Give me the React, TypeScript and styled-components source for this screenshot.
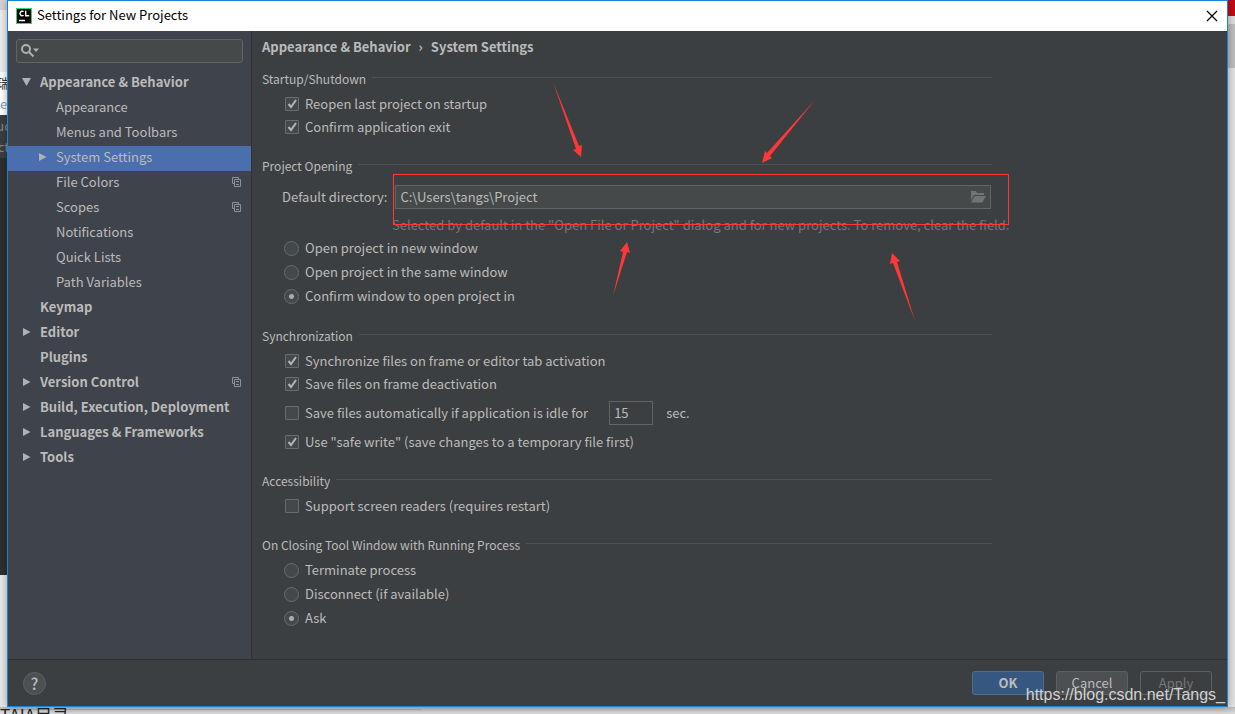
import React from "react";
import styled, { createGlobalStyle, css } from "styled-components";

const FONT = `"Noto Sans CJK SC", "Open Sans", sans-serif`;

const Global = createGlobalStyle`
  *, *::before, *::after { box-sizing: border-box; }
  body { margin: 0; font-family: ${FONT}; font-size: 13px; line-height: 18px; color: #bbbbbb; background: #e6e6e6; }
  button, input { font: inherit; color: inherit; margin: 0; }
`;

const Desktop = styled.div`
  display: grid;
  grid-template-columns: 7px minmax(0, 1fr) 7px;
  grid-template-rows: minmax(0, 1fr) 7px;
  height: 100vh;
  overflow: hidden;
`;

const Strip = styled.div`
  display: flex;
  flex-direction: column;
  overflow: hidden;
`;

const Patch = styled.div<{ $h?: number; $bg: string; $fg?: string }>`
  display: flex;
  flex-direction: column;
  align-items: center;
  justify-content: space-evenly;
  overflow: hidden;
  white-space: nowrap;
  ${(p) => (p.$h ? css`flex: none; height: ${p.$h}px;` : css`flex: 1;`)}
  background: ${(p) => p.$bg};
  color: ${(p) => p.$fg ?? "#333333"};
`;

const Faint = styled.span`
  color: #8f9bb3;
`;

const BottomStrip = styled.div`
  grid-column: 1 / -1;
  overflow: hidden;
  background: linear-gradient(#b0b0b0, #b0b0b0) 0 2px / 422px 1px no-repeat, linear-gradient(#b8b8b8, #dedede);
  color: #222222;
  font-size: 17px;
  line-height: 16px;
  white-space: nowrap;
`;

const Window = styled.main`
  position: relative;
  display: flex;
  flex-direction: column;
  min-width: 0;
  border: 1px solid #1883d7;
  box-shadow: 0 0 8px rgba(0, 0, 0, 0.35);
  background: #3c3f41;
`;

const TitleBar = styled.header`
  display: flex;
  align-items: center;
  gap: 5px;
  height: 30px;
  flex: none;
  padding: 0 7px 0 8px;
  background: #ffffff;
  color: #000000;
`;

const Title = styled.h1`
  flex: 1;
  margin: 0;
  padding-bottom: 2px;
  font-size: 13px;
  font-weight: 400;
`;

const CloseButton = styled.button`
  display: flex;
  border: 0;
  padding: 2px;
  background: none;
`;

const Body = styled.div`
  display: flex;
  flex: 1;
  min-height: 0;
`;

const Sidebar = styled.aside`
  width: 244px;
  flex: none;
  padding-top: 8px;
  border-right: 1px solid #323232;
  background: #3f434c;
`;

const SearchBox = styled.label`
  display: flex;
  align-items: center;
  height: 24px;
  margin: 0 8px 8px;
  padding: 0 4px;
  border: 1px solid #646464;
  border-radius: 3px;
  background: #45494a;
`;

const SearchInput = styled.input`
  flex: 1;
  min-width: 0;
  border: 0;
  outline: 0;
  background: none;
`;

const Tree = styled.ul`
  list-style: none;
  margin: 0;
  padding: 0;
`;

const TreeRow = styled.li<{ $top?: boolean; $selected?: boolean }>`
  display: flex;
  align-items: center;
  height: 25px;
  padding: 0 9px 3px ${(p) => (p.$top ? 14 : 30)}px;
  font-weight: ${(p) => (p.$top ? 700 : 400)};
  background: ${(p) => (p.$selected ? "#4b6eaf" : "transparent")};
`;

const Toggle = styled.span`
  display: flex;
  width: 18px;
  flex: none;
`;

const TreeLabel = styled.span`
  flex: 1;
  white-space: nowrap;
`;

const Content = styled.section`
  flex: 1;
  min-width: 0;
  padding: 7px 235px 0 10px;
`;

const Crumbs = styled.nav`
  display: flex;
  gap: 8px;
  height: 18px;
  font-weight: 700;
`;

const Group = styled.fieldset<{ $gap: number }>`
  display: flex;
  flex-direction: column;
  min-width: 0;
  margin: ${(p) => p.$gap}px 0 0;
  border: 0;
  padding: 0;
`;

const Legend = styled.legend`
  display: flex;
  align-items: center;
  gap: 6px;
  width: 100%;
  padding: 0;
  margin-bottom: 4px;
  font-size: 12px;
  line-height: 18px;
  white-space: nowrap;
  &::after {
    content: "";
    flex: 1;
    height: 1px;
    margin-bottom: 3px;
    background: #515151;
  }
`;

const Option = styled.label`
  display: flex;
  align-items: center;
  gap: 6px;
  height: 23px;
  padding-left: 22px;
  white-space: nowrap;
`;

const RadioLine = styled(Option)`
  height: 24px;
`;

const Check = styled.input.attrs({ type: "checkbox" })`
  appearance: none;
  width: 14px;
  height: 14px;
  flex: none;
  margin: 0 0 0 1px;
  border: 1px solid #6b6b6b;
  border-radius: 1px;
  background: #43494a;
  &:checked {
    background: #43494a url("data:image/svg+xml,%3Csvg xmlns='http://www.w3.org/2000/svg' width='12' height='12'%3E%3Cpath d='M2.500 6l2.500 3L10 2' fill='none' stroke='%23b4b4b4' stroke-width='2'/%3E%3C/svg%3E");
  }
`;

const Radio = styled.input.attrs({ type: "radio" })`
  appearance: none;
  width: 15px;
  height: 15px;
  flex: none;
  border: 1px solid #6b6b6b;
  border-radius: 50%;
  background: #43494a;
  &:checked {
    background: radial-gradient(circle, #ababab 2px, #43494a 3px);
  }
`;

const IdleRow = styled.div`
  display: flex;
  align-items: center;
  gap: 13px;
  height: 35px;
`;

const IdleInput = styled.input`
  width: 44px;
  height: 24px;
  margin-left: 8px;
  padding: 0 4px;
  border: 1px solid #646464;
  background: #3c3f41;
`;

const DirRow = styled.div`
  display: flex;
  align-items: center;
  gap: 8px;
  height: 36px;
  padding: 0 1px 0 20px;
  white-space: nowrap;
`;

const PathField = styled.div`
  display: flex;
  align-items: center;
  flex: 1;
  height: 24px;
  padding: 0 4px;
  border: 1px solid #646464;
  background: #45494a;
`;

const PathInput = styled.input`
  flex: 1;
  min-width: 0;
  border: 0;
  padding: 0;
  outline: 0;
  background: none;
`;

const IconButton = styled.button`
  display: flex;
  border: 0;
  padding: 0;
  background: none;
`;

const Hint = styled.p`
  margin: 1px 0 2px 130px;
  color: #777777;
  white-space: nowrap;
`;

const Footer = styled.footer`
  display: flex;
  align-items: center;
  gap: 12px;
  height: 47px;
  flex: none;
  padding: 0 15px;
  border-top: 1px solid #323232;
`;

const HelpButton = styled.button`
  width: 23px;
  height: 23px;
  margin-right: auto;
  padding: 0;
  border: 1px solid #5e6060;
  border-radius: 50%;
  background: #4c5052;
  font-size: 16px;
  font-weight: 500;
  line-height: 21px;
`;

const Button = styled.button<{ $kind?: "primary" | "off" }>`
  width: 72px;
  height: 24px;
  padding: 0;
  border: 1px solid ${(p) => (p.$kind === "primary" ? "#4c708c" : "#5e6060")};
  border-radius: 3px;
  background: ${(p) => (p.$kind === "primary" ? "#365880" : p.$kind === "off" ? "#3c3f41" : "#4c5052")};
  color: ${(p) => (p.$kind === "off" ? "#777777" : "#bbbbbb")};
  font-weight: ${(p) => (p.$kind === "primary" ? 700 : 400)};
`;

const Marks = styled.svg`
  position: absolute;
  left: 0;
  top: 0;
  pointer-events: none;
`;

const Watermark = styled.span`
  position: absolute;
  right: 2px;
  bottom: 2px;
  color: #d2d2d2;
  font-family: "Liberation Sans", sans-serif;
  font-size: 16px;
`;

const Arrow = ({ open }: { open: boolean }) => (
  <svg width="10" height="10" fill="#afb1b3" aria-hidden="true">
    <path d={open ? "M0 1h9L4.500 9z" : "M1 1v8l7.500-4z"} />
  </svg>
);

const CopyIcon = () => (
  <svg width="10" height="10" fill="none" stroke="#87939a" aria-hidden="true">
    <path d="M2 6.500H.5v-6h6V2M2.500 2.500h6v7h-6zM4 4.500h3M4 7.500h3" />
  </svg>
);

type Item = { label: string; top?: boolean; toggle?: "open" | "closed"; copy?: boolean; selected?: boolean };

const ITEMS: Item[] = [
  { label: "Appearance & Behavior", top: true, toggle: "open" },
  { label: "Appearance" },
  { label: "Menus and Toolbars" },
  { label: "System Settings", toggle: "closed", selected: true },
  { label: "File Colors", copy: true },
  { label: "Scopes", copy: true },
  { label: "Notifications" },
  { label: "Quick Lists" },
  { label: "Path Variables" },
  { label: "Keymap", top: true },
  { label: "Editor", top: true, toggle: "closed" },
  { label: "Plugins", top: true },
  { label: "Version Control", top: true, toggle: "closed", copy: true },
  { label: "Build, Execution, Deployment", top: true, toggle: "closed" },
  { label: "Languages & Frameworks", top: true, toggle: "closed" },
  { label: "Tools", top: true, toggle: "closed" },
];

const CheckOption = ({ label, on }: { label: string; on?: boolean }) => (
  <Option>
    <Check defaultChecked={on} />
    {label}
  </Option>
);

const RadioOption = ({ label, name, on }: { label: string; name: string; on?: boolean }) => (
  <RadioLine>
    <Radio name={name} defaultChecked={on} />
    {label}
  </RadioLine>
);

export default function App() {
  return (
    <>
      <Global />
      <Desktop>
        <Strip>
          <Patch $h={10} $bg="#d4d4d4" />
          <Patch $h={62} $bg="#eeeeee" />
          <Patch $h={43} $bg="#ffffff"><span>瑞</span><Faint>e</Faint></Patch>
          <Patch $h={43} $bg="#3c3f41" $fg="#8a8a8a"><span>uc</span><span>ct</span></Patch>
          <Patch $h={417} $bg="#2f2f2f" />
          <Patch $bg="#e8e8e8" />
        </Strip>
        <Window>
          <TitleBar>
            <svg width="16" height="16" aria-hidden="true">
              <rect width="16" height="16" fill="#21d789" />
              <rect x="1" y="1" width="14" height="14" fill="#000000" />
              <path d="M7.600 3.800A2.200 2.200 0 1 0 7.600 7.200M9.700 2.800v5h3.500M3 12.500h6" fill="none" stroke="#ffffff" strokeWidth="1.400" />
            </svg>
            <Title>Settings for New Projects</Title>
            <CloseButton aria-label="Close">
              <svg width="12" height="12" stroke="#000000" strokeWidth="1.200" aria-hidden="true"><path d="M1 1l10 10M11 1L1 11" /></svg>
            </CloseButton>
          </TitleBar>
          <Body>
            <Sidebar>
              <SearchBox>
                <svg width="20" height="16" fill="none" stroke="#afb1b3" strokeWidth="2" aria-hidden="true">
                  <circle cx="5" cy="6" r="4" /><path d="M8 9l4.500 4.500" />
                  <path d="M12 5.500h6l-3 3.500z" fill="#afb1b3" stroke="none" />
                </svg>
                <SearchInput aria-label="Search settings" />
              </SearchBox>
              <Tree>
                {ITEMS.map((it) => (
                  <TreeRow key={it.label} $top={it.top} $selected={it.selected}>
                    <Toggle>{it.toggle && <Arrow open={it.toggle === "open"} />}</Toggle>
                    <TreeLabel>{it.label}</TreeLabel>
                    {it.copy && <CopyIcon />}
                  </TreeRow>
                ))}
              </Tree>
            </Sidebar>
            <Content>
              <Crumbs><span>Appearance &amp; Behavior</span><span>›</span><span>System Settings</span></Crumbs>
              <Group $gap={14}>
                <Legend>Startup/Shutdown</Legend>
                <CheckOption label="Reopen last project on startup" on />
                <CheckOption label="Confirm application exit" on />
              </Group>
              <Group $gap={19}>
                <Legend>Project Opening</Legend>
                <DirRow>
                  <label htmlFor="dir">Default directory:</label>
                  <PathField>
                    <PathInput id="dir" defaultValue={"C:\\Users\\tangs\\Project"} />
                    <IconButton aria-label="Browse">
                      <svg width="16" height="12" fill="#6e7477" aria-hidden="true"><path d="M1 0h5l1 2h7v2H4L1 9zM4.500 5H16l-3.500 6.500H1z" /></svg>
                    </IconButton>
                  </PathField>
                </DirRow>
                <Hint>Selected by default in the "Open File or Project" dialog and for new projects. To remove, clear the field.</Hint>
                <RadioOption name="open" label="Open project in new window" />
                <RadioOption name="open" label="Open project in the same window" />
                <RadioOption name="open" label="Confirm window to open project in" on />
              </Group>
              <Group $gap={19}>
                <Legend>Synchronization</Legend>
                <CheckOption label="Synchronize files on frame or editor tab activation" on />
                <CheckOption label="Save files on frame deactivation" on />
                <IdleRow>
                  <CheckOption label="Save files automatically if application is idle for" />
                  <IdleInput aria-label="Idle seconds" defaultValue="15" />
                  <span>sec.</span>
                </IdleRow>
                <CheckOption label={'Use "safe write" (save changes to a temporary file first)'} on />
              </Group>
              <Group $gap={19}>
                <Legend>Accessibility</Legend>
                <CheckOption label="Support screen readers (requires restart)" />
              </Group>
              <Group $gap={19}>
                <Legend>On Closing Tool Window with Running Process</Legend>
                <RadioOption name="close" label="Terminate process" />
                <RadioOption name="close" label="Disconnect (if available)" />
                <RadioOption name="close" label="Ask" on />
              </Group>
            </Content>
          </Body>
          <Footer>
            <HelpButton aria-label="Help">?</HelpButton>
            <Button $kind="primary">OK</Button>
            <Button>Cancel</Button>
            <Button $kind="off" disabled>Apply</Button>
          </Footer>
          <Marks width="1020" height="340" viewBox="8 1 1020 340" fill="#ff3737" aria-hidden="true">
            <rect x="393.500" y="174.500" width="615" height="50" fill="none" stroke="#ff3737" />
            <path d="M553 82L576 149 573 150 581 157 582 145 579 146z" />
            <path d="M815 100L767 153 765 151 762 163 772 158 770 156z" />
            <path d="M613 296L623 252 620 251 627 242 630 253 627 252z" />
            <path d="M915 321L893 263 890 264 892 253 900 261 897 262z" />
          </Marks>
          <Watermark>https://blog.csdn.net/Tangs_</Watermark>
        </Window>
        <Strip>
          <Patch $h={16} $bg="#c00b18" />
          <Patch $h={8} $bg="#dddddd" />
          <Patch $h={44} $bg="#bdbdbd" />
          <Patch $bg="#e2e2e2" />
        </Strip>
        <BottomStrip>TAIA目录</BottomStrip>
      </Desktop>
    </>
  );
}
